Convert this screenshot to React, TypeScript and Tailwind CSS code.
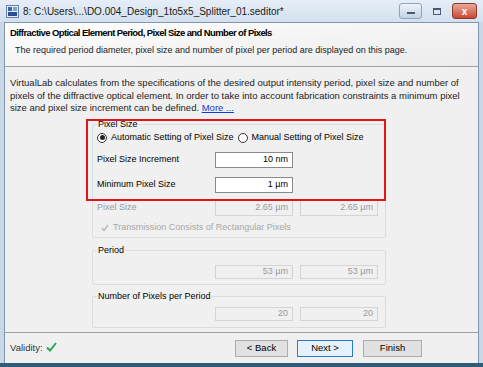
import { useState } from "react";

const font = { fontFamily: '"Liberation Sans", Arial, sans-serif' };

const Field = ({ value, enabled, h }: { value: string; enabled?: boolean; h?: string }) => (
  <div
    className={`${h ?? "h-[16px]"} w-[78px] flex items-center justify-end pr-[4px] text-[9px] border ${
      enabled ? "bg-white border-[#8a8a8a] text-black" : "bg-[#f0f0f0] border-[#d4d4d4] text-[#9a9a9a]"
    }`}
  >
    {value}
  </div>
);

const Radio = ({ on }: { on: boolean }) => (
  <span className="w-[10px] h-[10px] rounded-full border border-[#333] bg-white flex items-center justify-center shrink-0">
    {on && <span className="w-[5px] h-[5px] rounded-full bg-[#222]" />}
  </span>
);

const App = () => {
  const [auto, setAuto] = useState(true);

  return (
    <div className="w-[483px] h-[367px] overflow-hidden bg-[#c9d7e6] flex flex-col text-black" style={font}>
      {/* title bar */}
      <div className="h-[22px] shrink-0 flex items-center bg-gradient-to-b from-[#e6eef7] to-[#d3e0ee] px-[6px]">
        <svg width="13" height="13" viewBox="0 0 13 13" className="shrink-0">
          <rect x="0.5" y="0.5" width="12" height="12" fill="#e8eef8" stroke="#6b82a8" />
          <rect x="2" y="2" width="4" height="4" fill="#3a63b0" />
          <rect x="7" y="2" width="4" height="4" fill="#7fa0d8" />
          <rect x="2" y="7" width="9" height="4" fill="#2a4f96" />
        </svg>
        <span className="ml-[4px] text-[10px] text-[#1a1a1a]">8: C:\Users\...\DO.004_Design_1to5x5_Splitter_01.seditor*</span>
        <div className="ml-auto flex items-center gap-[4px]">
          <div className="w-[23px] h-[16px] rounded-[3px] border border-[#8ea3bd] bg-gradient-to-b from-[#eef3f9] to-[#c5d3e4] flex items-center justify-center">
            <span className="w-[8px] h-[2px] bg-[#4a5a70] mt-[4px]" />
          </div>
          <div className="w-[22px] h-[16px] flex items-center justify-center">
            <span className="w-[8px] h-[7px] border border-[#4a5a70] border-t-2" />
          </div>
          <div className="w-[25px] h-[16px] rounded-[3px] border border-[#8b3a2e] bg-gradient-to-b from-[#e9a99a] to-[#c8452e] flex items-center justify-center text-white text-[10px] font-bold">
            x
          </div>
        </div>
      </div>

      {/* body */}
      <div className="flex-1 mx-[4px] flex flex-col bg-[#f0f0f0] border border-[#7f97b3] border-b-0">
        {/* header */}
        <div className="h-[44px] shrink-0 bg-gradient-to-br from-white via-[#f4f4f4] to-[#ececec] border-b border-[#a0a0a0] pl-[5px] pt-[4px]">
          <div className="text-[9.5px] font-bold leading-[12px] tracking-[-0.6px]">
            Diffractive Optical Element Period, Pixel Size and Number of Pixels
          </div>
          <div className="text-[9px] leading-[12px] mt-[5px] pl-[5px] text-[#222]">
            The required period diameter, pixel size and number of pixel per period are displayed on this page.
          </div>
        </div>

        {/* content */}
        <div className="flex-1 flex flex-col px-[5px] pt-[10px] border-b border-[#a0a0a0]">
          <p className="text-[9.5px] leading-[12.6px] text-[#222] w-[462px]">
            VirtualLab calculates from the specifications of the desired output intensity period, pixel size and number of
            pixels of the diffractive optical element. In order to take into account fabrication constraints a minimum pixel
            size and pixel size increment can be defined. <a className="text-[#0a3fd6] underline">More ...</a>
          </p>

          <div className="ml-[82px] w-[294px] flex flex-col mt-[9px]">
            {/* pixel size group */}
            <div className="relative h-[114px] border border-[#d8dde2] rounded-[2px] flex flex-col pl-[4px] text-[9px]">
              <span className="-mt-[7px] w-fit px-[1px] bg-[#f0f0f0] leading-[12px]">Pixel Size</span>
              <div className="h-[12px] mt-[2px] flex items-center gap-[4px]">
                <button className="flex items-center gap-[4px]" onClick={() => setAuto(true)}>
                  <Radio on={auto} />
                  Automatic Setting of Pixel Size
                </button>
                <button className="flex items-center gap-[4px]" onClick={() => setAuto(false)}>
                  <Radio on={!auto} />
                  Manual Setting of Pixel Size
                </button>
              </div>
              <div className="flex items-center h-[16px] mt-[8px]">
                <span className="w-[118px]">Pixel Size Increment</span>
                <Field value="10 nm" enabled />
              </div>
              <div className="flex items-center h-[16px] mt-[9px]">
                <span className="w-[118px]">Minimum Pixel Size</span>
                <Field value="1 µm" enabled />
              </div>
              <div className="flex items-center h-[16px] mt-[7px] text-[#9a9a9a]">
                <span className="w-[118px]">Pixel Size</span>
                <Field value="2.65 µm" />
                <span className="w-[7px]" />
                <Field value="2.65 µm" />
              </div>
              <div className="flex items-center h-[12px] mt-[6px] text-[#a8a8a8] gap-[4px] pl-[4px]">
                <svg width="8" height="8" viewBox="0 0 8 8">
                  <path d="M1 4 L3 6.5 L7 1" fill="none" stroke="#b5b5b5" strokeWidth="1.3" />
                </svg>
                Transmission Consists of Rectangular Pixels
              </div>
              <div className="absolute -top-[6px] -left-[7px] w-[300px] h-[82px] border-2 border-[#e3141b] pointer-events-none" />
            </div>

            {/* period group */}
            <div className="h-[35px] mt-[12px] border border-[#d8dde2] rounded-[2px] flex flex-col pl-[4px] text-[9px]">
              <span className="-mt-[7px] w-fit px-[1px] bg-[#f0f0f0] leading-[12px]">Period</span>
              <div className="flex items-center mt-[9px] pl-[118px]">
                <Field value="53 µm" h="h-[14px]" />
                <span className="w-[7px]" />
                <Field value="53 µm" h="h-[14px]" />
              </div>
            </div>

            {/* number of pixels group */}
            <div className="h-[32px] mt-[11px] border border-[#d8dde2] rounded-[2px] flex flex-col pl-[4px] text-[9px]">
              <span className="-mt-[7px] w-fit px-[1px] bg-[#f0f0f0] leading-[12px]">Number of Pixels per Period</span>
              <div className="flex items-center mt-[5px] pl-[118px]">
                <Field value="20" h="h-[14px]" />
                <span className="w-[7px]" />
                <Field value="20" h="h-[14px]" />
              </div>
            </div>
          </div>
        </div>

        {/* footer */}
        <div className="h-[30px] shrink-0 flex items-center px-[5px] text-[9.5px]">
          <span className="text-[#333]">Validity:</span>
          <svg width="11" height="10" viewBox="0 0 11 10" className="ml-[3px] -mt-[3px]">
            <path d="M1 5.5 L4 8.5 L10 1" fill="none" stroke="#2ea44f" strokeWidth="2" />
          </svg>
          <div className="ml-auto mr-[51px] flex items-center">
            <button className="w-[53px] h-[17px] bg-[#e1e1e1] border border-[#adadad] text-[9.5px]">&lt; Back</button>
            <button className="w-[56px] h-[17px] ml-[9px] bg-[#e5f1fb] border border-[#2a7ad0] text-[9.5px]">Next &gt;</button>
            <button className="w-[59px] h-[17px] ml-[10px] bg-[#e1e1e1] border border-[#adadad] text-[9.5px]">Finish</button>
          </div>
        </div>
      </div>
      <div className="h-[4px] shrink-0 bg-[#2f5d78]" />
    </div>
  );
};

export default App;
